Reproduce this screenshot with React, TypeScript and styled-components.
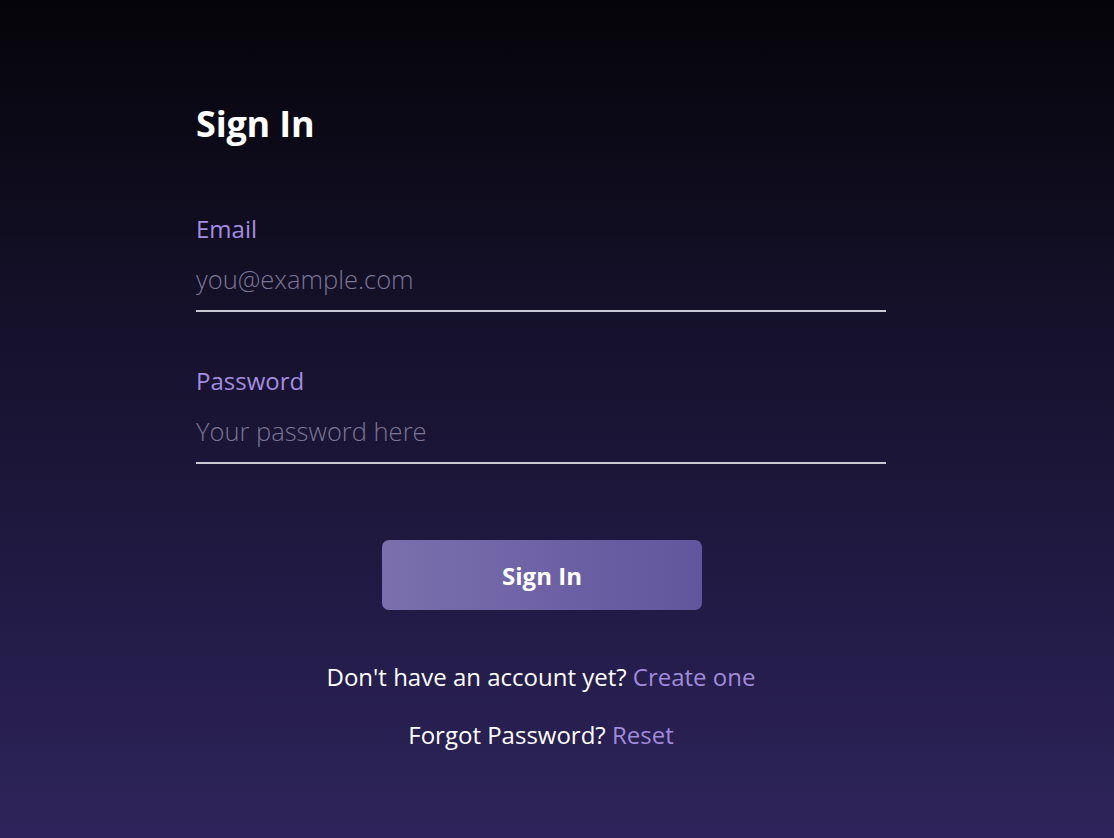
import React from 'react';
import styled, { createGlobalStyle } from 'styled-components';

const GlobalStyle = createGlobalStyle`
  html, body {
    margin: 0;
    padding: 0;
  }
  body {
    font-family: "Open Sans", "Noto Sans", sans-serif;
  }
  * {
    box-sizing: border-box;
  }
`;

const Page = styled.div`
  min-height: 100vh;
  display: flex;
  justify-content: center;
  padding: 102px 32px 0 0;
  background: linear-gradient(180deg, #050409 0%, #141028 35%, #211a44 70%, #2e245b 100%);
`;

const Form = styled.form`
  width: 690px;
  display: flex;
  flex-direction: column;
`;

const Title = styled.h1`
  margin: 0 0 68px;
  font-size: 36px;
  line-height: 44px;
  font-weight: 700;
  letter-spacing: -0.2px;
  color: #ffffff;
`;

const Field = styled.div`
  display: flex;
  flex-direction: column;
  margin-bottom: ${({ $last }: { $last?: boolean }) => ($last ? '76px' : '54px')};
`;

const Label = styled.label`
  font-size: 24px;
  line-height: 30px;
  font-weight: 500;
  color: #a38ee0;
  margin-bottom: 18px;
`;

const Input = styled.input`
  width: 100%;
  height: 50px;
  padding: 0 0 15px;
  border: none;
  border-bottom: 2px solid #cbc8d6;
  background: transparent;
  font-family: "Open Sans", "Noto Sans", sans-serif;
  font-size: 25.5px;
  font-weight: 300;
  color: #ffffff;
  outline: none;

  &::placeholder {
    color: #7a7594;
  }
`;

const SubmitButton = styled.button`
  align-self: center;
  width: 320px;
  height: 70px;
  margin: 0 0 52px 2px;
  border: none;
  border-radius: 7px;
  background: linear-gradient(90deg, #7b70ad 0%, #61559d 100%);
  color: #ffffff;
  font-family: "Open Sans", "Noto Sans", sans-serif;
  font-size: 24px;
  font-weight: 700;
  cursor: pointer;
`;

const FooterLine = styled.p`
  margin: 0 0 28px;
  text-align: center;
  font-size: 24px;
  line-height: 30px;
  font-weight: 500;
  color: #ffffff;
`;

const Link = styled.a`
  color: #a08bdc;
  font-weight: 400;
  text-decoration: none;
  cursor: pointer;
`;

export default function App() {
  return (
    <>
      <GlobalStyle />
      <Page>
        <Form onSubmit={(e) => e.preventDefault()}>
          <Title>Sign In</Title>
          <Field>
            <Label htmlFor="email">Email</Label>
            <Input id="email" type="email" placeholder="you@example.com" />
          </Field>
          <Field $last>
            <Label htmlFor="password">Password</Label>
            <Input id="password" type="password" placeholder="Your password here" />
          </Field>
          <SubmitButton type="submit">Sign In</SubmitButton>
          <FooterLine>
            Don't have an account yet? <Link>Create one</Link>
          </FooterLine>
          <FooterLine>
            Forgot Password? <Link>Reset</Link>
          </FooterLine>
        </Form>
      </Page>
    </>
  );
}
